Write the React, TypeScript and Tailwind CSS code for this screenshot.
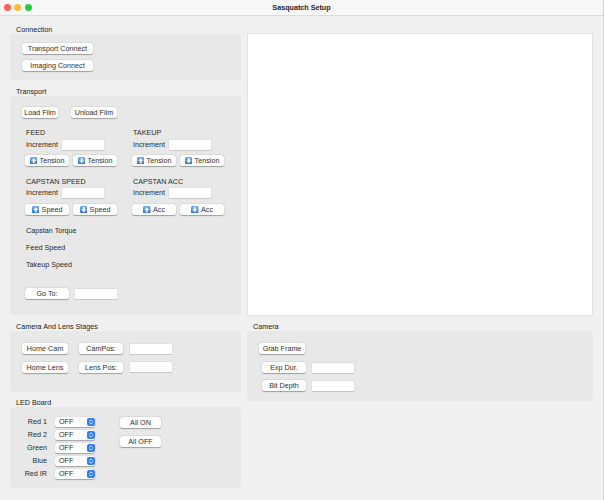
import React from "react";

const Btn = ({ className = "", children }: { className?: string; children: React.ReactNode }) => (
  <div
    className={`h-[11px] bg-white rounded-[2.5px] shadow-[0_0.5px_1px_rgba(0,0,0,0.3),0_0_0_0.5px_rgba(0,0,0,0.05)] flex items-center justify-center gap-[2.5px] leading-none text-[#2e2e2e] whitespace-nowrap ${className}`}
  >
    {children}
  </div>
);

const Input = ({ className = "" }: { className?: string }) => (
  <div className={`h-[10px] w-[42px] bg-white shadow-[0_0_0_0.5px_rgba(0,0,0,0.07),0_0.5px_0.5px_rgba(0,0,0,0.1)] ${className}`} />
);

const Arrow = ({ down = false }: { down?: boolean }) => (
  <svg width="7.5" height="7.5" viewBox="0 0 8 8" className="shrink-0">
    <defs>
      <linearGradient id={down ? "gd" : "gu"} x1="0" y1="0" x2="0" y2="1">
        <stop offset="0" stopColor="#74b0ee" />
        <stop offset="1" stopColor="#2d6fd3" />
      </linearGradient>
    </defs>
    <rect width="8" height="8" rx="1.5" fill={`url(#${down ? "gd" : "gu"})`} />
    {down ? (
      <path d="M4 6.6 L6.8 3.8 H5 V1.4 H3 V3.8 H1.2 Z" fill="white" />
    ) : (
      <path d="M4 1.4 L6.8 4.2 H5 V6.6 H3 V4.2 H1.2 Z" fill="white" />
    )}
  </svg>
);

const Select = () => (
  <div className="w-[40px] h-[10px] bg-white rounded-[2.5px] shadow-[0_0.5px_1px_rgba(0,0,0,0.3)] flex items-center justify-between pl-[4px] pr-[0.5px] leading-none">
    <span>OFF</span>
    <svg width="8" height="8" viewBox="0 0 8 8">
      <rect width="8" height="8" rx="2" fill="#2f7df6" />
      <path
        d="M2.6 3.2 L4 1.8 L5.4 3.2 M2.6 4.8 L4 6.2 L5.4 4.8"
        stroke="white"
        strokeWidth="0.9"
        fill="none"
        strokeLinecap="round"
        strokeLinejoin="round"
      />
    </svg>
  </div>
);

const Group = ({
  title,
  className = "",
  boxClass = "",
  children,
}: {
  title: string;
  className?: string;
  boxClass?: string;
  children: React.ReactNode;
}) => (
  <div className={className}>
    <div className="h-[9px] leading-[9px] pl-[6px] text-[#1a1a1a]">{title}</div>
    <div className={`bg-[#e8e8e8] rounded-[3px] ${boxClass}`}>{children}</div>
  </div>
);

const IncCol = ({ title, b1, b2, incMt, btnMt }: { title: string; b1: React.ReactNode; b2: React.ReactNode; incMt: string; btnMt: string }) => (
  <div>
    <div className="h-[9px] leading-[9px] pl-[1px]">{title}</div>
    <div className={`${incMt} flex items-center h-[10px]`}>
      <div className="w-[37px] pl-[1px] leading-none">Increment</div>
      <Input />
    </div>
    <div className={`${btnMt} flex gap-[4px]`}>
      <Btn className="w-[44px]">{b1}</Btn>
      <Btn className="w-[44px]">{b2}</Btn>
    </div>
  </div>
);

export default function App() {
  const leds = ["Red 1", "Red 2", "Green", "Blue", "Red IR"];
  return (
    <div className="w-[604px] h-[500px] bg-[#f0f0f0] overflow-hidden font-['Liberation_Sans',Arial,sans-serif] text-[7.2px] text-[#2a2a2a] border-r border-[#cfcfcf]">
      {/* title bar */}
      <div className="h-[16px] bg-[#f7f7f7] border-b border-[#dcdcdc] grid grid-cols-[1fr_auto_1fr] items-center">
        <div className="flex items-center gap-[3.5px] pl-[3.5px]">
          <div className="w-[7px] h-[7px] rounded-full bg-[#fe5f57]" />
          <div className="w-[7px] h-[7px] rounded-full bg-[#febc2e]" />
          <div className="w-[7px] h-[7px] rounded-full bg-[#28c840]" />
        </div>
        <div className="font-bold text-[#262626] leading-none">Sasquatch Setup</div>
        <div />
      </div>

      <div className="flex pl-[10px] gap-[6px]">
        {/* left column */}
        <div className="w-[231px] pt-[9px] flex flex-col">
          <Group title="Connection" boxClass="pt-[9px] pb-[9px] pl-[12px] flex flex-col gap-[6px]">
            <Btn className="w-[71px]">Transport Connect</Btn>
            <Btn className="w-[71px]">Imaging Connect</Btn>
          </Group>

          <Group title="Transport" className="mt-[7px]" boxClass="pt-[11px] pb-[16px]">
            <div className="flex gap-[13px] pl-[12px]">
              <Btn className="w-[36px]">Load Film</Btn>
              <Btn className="w-[46px]">Unload Film</Btn>
            </div>
            <div className="grid grid-cols-[107px_107px] pl-[15px] mt-[10px]">
              <IncCol
                title="FEED"
                incMt="mt-[3px]"
                btnMt="mt-[5px]"
                b1={<><Arrow /><span>Tension</span></>}
                b2={<><Arrow down /><span>Tension</span></>}
              />
              <IncCol
                title="TAKEUP"
                incMt="mt-[3px]"
                btnMt="mt-[5px]"
                b1={<><Arrow /><span>Tension</span></>}
                b2={<><Arrow down /><span>Tension</span></>}
              />
            </div>
            <div className="grid grid-cols-[107px_107px] pl-[15px] mt-[11px]">
              <IncCol
                title="CAPSTAN SPEED"
                incMt="mt-[2px]"
                btnMt="mt-[6px]"
                b1={<><Arrow /><span>Speed</span></>}
                b2={<><Arrow down /><span>Speed</span></>}
              />
              <IncCol
                title="CAPSTAN ACC"
                incMt="mt-[2px]"
                btnMt="mt-[6px]"
                b1={<><Arrow /><span>Acc</span></>}
                b2={<><Arrow down /><span>Acc</span></>}
              />
            </div>
            <div className="pl-[16px] mt-[11px] h-[9px] leading-[9px]">Capstan Torque</div>
            <div className="pl-[16px] mt-[8px] h-[9px] leading-[9px]">Feed Speed</div>
            <div className="pl-[16px] mt-[8px] h-[9px] leading-[9px]">Takeup Speed</div>
            <div className="mt-[19px] pl-[15px] flex items-center gap-[6px]">
              <Btn className="w-[44px]">Go To:</Btn>
              <Input />
            </div>
          </Group>

          <Group title="Camera And Lens Stages" className="mt-[7px]" boxClass="pt-[12px] pb-[19px] pl-[12px] flex flex-col gap-[8px]">
            <div className="flex items-center">
              <Btn className="w-[46px]">Home Cam</Btn>
              <Btn className="w-[44px] ml-[11px]">CamPos:</Btn>
              <Input className="ml-[7px]" />
            </div>
            <div className="flex items-center">
              <Btn className="w-[46px]">Home Lens</Btn>
              <Btn className="w-[44px] ml-[11px]">Lens Pos:</Btn>
              <Input className="ml-[7px] -mt-[2px]" />
            </div>
          </Group>

          <Group title="LED Board" className="mt-[6px]" boxClass="pt-[10px] pb-[9px] pl-[9px] flex items-start">
            <div className="flex flex-col gap-[3px]">
              {leds.map((l) => (
                <div key={l} className="flex items-center h-[10px]">
                  <div className="w-[28px] text-right leading-none">{l}</div>
                  <div className="ml-[8px]">
                    <Select />
                  </div>
                </div>
              ))}
            </div>
            <div className="ml-[25px] flex flex-col gap-[8px]">
              <Btn className="w-[41px] h-[10.5px]">All ON</Btn>
              <Btn className="w-[41px] h-[10.5px]">All OFF</Btn>
            </div>
          </Group>
        </div>

        {/* right column */}
        <div className="w-[346px] flex flex-col">
          <div className="mt-[17px] h-[283px] bg-white border border-[#e2e2e2]" />
          <Group title="Camera" className="mt-[6px]" boxClass="pt-[12px] pb-[10px] pl-[12px]">
            <Btn className="w-[46px]">Grab Frame</Btn>
            <div className="mt-[8px] pl-[3px] flex items-center gap-[6px]">
              <Btn className="w-[44px]">Exp Dur.</Btn>
              <Input />
            </div>
            <div className="mt-[7px] pl-[3px] flex items-center gap-[6px]">
              <Btn className="w-[44px]">Bit Depth</Btn>
              <Input />
            </div>
          </Group>
        </div>
      </div>
    </div>
  );
}
